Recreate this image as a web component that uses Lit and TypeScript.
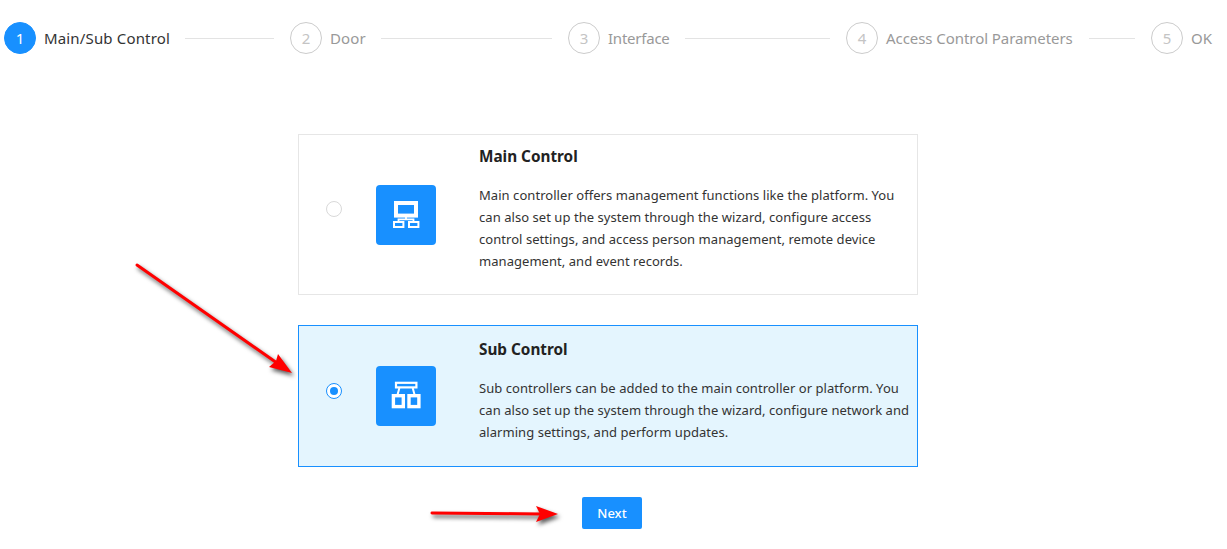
import { LitElement, html, css, svg } from "lit";
import { customElement } from "lit/decorators.js";

const steps = [
  { n: 1, label: "Main/Sub Control", line: 89, width: 126, track: 0.16 },
  { n: 2, label: "Door", line: 171, width: 36, track: 0.1 },
  { n: 3, label: "Interface", line: 145, width: 62, track: -0.23 },
  { n: 4, label: "Access Control Parameters", line: 46, width: 188, track: -0.06 },
  { n: 5, label: "OK", line: 0, width: 21, track: 0 },
];

const mainIcon = svg`<svg class="glyph" viewBox="0 0 60 60" fill="none" stroke="#fff">
  <rect x="20" y="18" width="20" height="12.6" stroke-width="4"/>
  <path d="M30 32v2.5M22.5 37v-2.6h15V37" stroke-width="1.8"/>
  <rect x="18" y="37" width="9.4" height="5" stroke-width="2"/>
  <rect x="33" y="37" width="9.4" height="5" stroke-width="2"/>
</svg>`;

const subIcon = svg`<svg class="glyph" viewBox="0 0 60 60" fill="none" stroke="#fff">
  <rect x="20" y="16.8" width="20.4" height="4.6" stroke-width="2.2"/>
  <path d="M23.4 22l-1.8 6.5M36.7 22l1.8 6.5" stroke-width="2"/>
  <rect x="17.4" y="29.7" width="9.9" height="10.9" stroke-width="3.4"/>
  <rect x="33" y="29.7" width="9.9" height="10.9" stroke-width="3.4"/>
</svg>`;

@customElement("app-root")
export class AppRoot extends LitElement {
  static styles = css`
    :host {
      display: block;
      position: relative;
      width: 1227px;
      height: 549px;
      overflow: hidden;
      background: #fff;
      font-family: "Noto Sans", "Open Sans", sans-serif;
      font-size: 14px;
      color: #333;
    }
    .stepper {
      display: flex;
      align-items: center;
      padding: 22px 0 0 4px;
      height: 32px;
    }
    .num {
      flex: none;
      width: 32px;
      height: 32px;
      box-sizing: border-box;
      border: 1px solid #ccc;
      border-radius: 50%;
      display: flex;
      align-items: center;
      justify-content: center;
      color: #c4c4c4;
      font-size: 15px;
      margin-right: 8px;
    }
    .num.active {
      background: #1890ff;
      border-color: #1890ff;
      color: #fff;
    }
    .label {
      flex: none;
      white-space: nowrap;
      color: #999;
      font-size: 15px;
      line-height: 22px;
    }
    .label.active { color: #333; }
    .line {
      flex: none;
      height: 1px;
      background: #e3e3e3;
      margin: 0 16px 0 15px;
    }
    .cards {
      width: 620px;
      margin: 80px 0 0 298px;
      display: flex;
      flex-direction: column;
      gap: 30px;
    }
    .card {
      box-sizing: border-box;
      display: flex;
      align-items: center;
      border: 1px solid #e6e6e6;
      background: #fff;
    }
    .card.one { height: 161px; }
    .card.two { height: 142px; background: #e4f5fe; border-color: #1890ff; }
    .radio {
      flex: none;
      box-sizing: border-box;
      width: 16px;
      height: 16px;
      margin: 0 0 11px 27px;
      border: 1px solid #d9d9d9;
      border-radius: 50%;
      background: #fff;
      display: flex;
      align-items: center;
      justify-content: center;
    }
    .two .radio { border-color: #1890ff; }
    .dot { width: 8px; height: 8px; border-radius: 50%; background: #1890ff; }
    .icon {
      flex: none;
      width: 60px;
      height: 60px;
      margin-left: 34px;
      border-radius: 4px;
      background: #1890ff;
    }
    .glyph { display: block; width: 60px; height: 60px; }
    .body { margin-left: 44px; flex: 1; padding-right: 6px; align-self: flex-start; }
    .one .body { padding-top: 9px; }
    .two .body { padding-top: 11px; }
    h3 {
      margin: 0 0 16px -1px;
      font-size: 15.3px;
      line-height: 24px;
      font-weight: 700;
      color: #222;
    }
    p {
      margin: 0 0 0 -1px;
      font-size: 13px;
      letter-spacing: 0.05px;
      line-height: 22px;
      color: #333;
    }
    .actions { display: flex; margin: 30px 0 0 582px; }
    button {
      width: 60px;
      height: 32px;
      border: 0;
      border-radius: 2px;
      background: #1890ff;
      color: #fff;
      font: 500 13px "Noto Sans", sans-serif;
      padding: 0;
    }
    .arrows {
      position: absolute;
      left: 0;
      top: 0;
      width: 1227px;
      height: 549px;
      pointer-events: none;
      filter: drop-shadow(2px 3px 2px rgba(0, 0, 0, 0.65));
    }
  `;

  render() {
    return html`
      <div class="stepper">
        ${steps.map(
          (s) => html`
            <div class="num ${s.n === 1 ? "active" : ""}">${s.n}</div>
            <div class="label ${s.n === 1 ? "active" : ""}" style="width:${s.width}px;letter-spacing:${s.track}px">${s.label}</div>
            ${s.line ? html`<div class="line" style="width:${s.line}px"></div>` : ""}
          `
        )}
      </div>
      <div class="cards">
        <div class="card one">
          <div class="radio"></div>
          <div class="icon">${mainIcon}</div>
          <div class="body">
            <h3>Main Control</h3>
            <p>Main controller offers management functions like the platform. You can also set up the system through the wizard, configure access control settings, and access person management, remote device management, and event records.</p>
          </div>
        </div>
        <div class="card two">
          <div class="radio"><div class="dot"></div></div>
          <div class="icon">${subIcon}</div>
          <div class="body">
            <h3>Sub Control</h3>
            <p>Sub controllers can be added to the main controller or platform. You can also set up the system through the wizard, configure network and alarming settings, and perform updates.</p>
          </div>
        </div>
      </div>
      <div class="actions"><button>Next</button></div>
      <svg class="arrows" viewBox="0 0 1227 549">
        <path d="M137 265L277 363" stroke="#f00" stroke-width="3" stroke-linecap="round" fill="none"/>
        <path d="M292 373L278 354L276 361L269 367Z" fill="#f00"/>
        <path d="M432 513L542 514" stroke="#f00" stroke-width="3" stroke-linecap="round" fill="none"/>
        <path d="M558 514L536 506L540 514L536 522Z" fill="#f00"/>
      </svg>
    `;
  }
}
